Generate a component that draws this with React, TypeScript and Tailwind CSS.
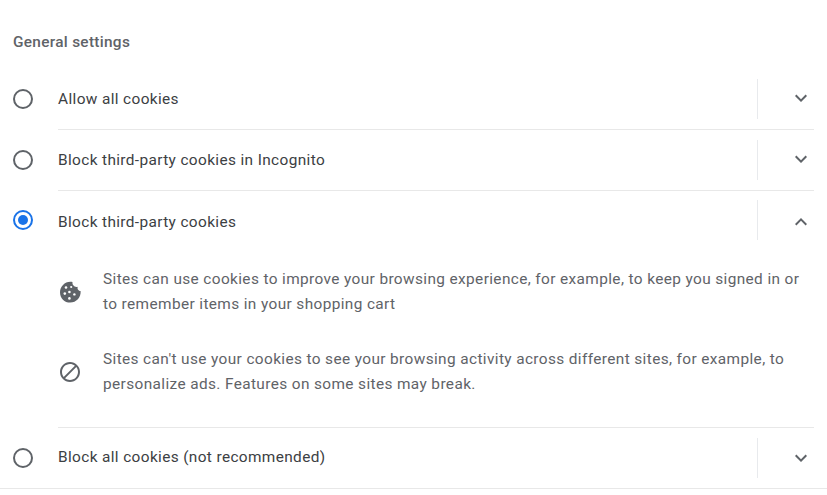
const font = "font-['Roboto',sans-serif]";

function Chevron({ up }: { up?: boolean }) {
  return (
    <svg width="24" height="24" viewBox="0 0 24 24" fill="#5f6368">
      {up ? (
        <path d="M7.41 15.41 12 10.83l4.59 4.58L18 14l-6-6-6 6z" />
      ) : (
        <path d="M7.41 8.59 12 13.17l4.59-4.58L18 10l-6 6-6-6z" />
      )}
    </svg>
  );
}

function Radio({ checked }: { checked?: boolean }) {
  return (
    <div
      className={`w-5 h-5 rounded-full border-2 flex items-center justify-center shrink-0 ${
        checked ? "border-[#1a73e8]" : "border-[#5f6368]"
      }`}
    >
      {checked && <div className="w-2.5 h-2.5 rounded-full bg-[#1a73e8]" />}
    </div>
  );
}

function Row({
  label,
  checked,
  open,
  h,
  line,
  radioPad = "",
  textPad = "",
  chevPad = "",
}: {
  label: string;
  checked?: boolean;
  open?: boolean;
  h: string;
  line?: boolean;
  radioPad?: string;
  textPad?: string;
  chevPad?: string;
}) {
  return (
    <div className={`flex items-center ${h}`}>
      <div className={`w-[58px] pl-[13px] shrink-0 ${radioPad}`}>
        <Radio checked={checked} />
      </div>
      <div className={`flex-1 h-full flex items-center ${line ? "border-b border-[#e8e8e8]" : ""} mr-[13px]`}>
        <span className={`flex-1 text-[15.4px] tracking-[0.37px] text-[#3c4043] ${textPad}`}>{label}</span>
        <div className="w-px h-10 bg-[#e8eaed]" />
        <div className={`w-[56px] flex justify-end pr-[1.5px] ${chevPad}`}>
          <Chevron up={open} />
        </div>
      </div>
    </div>
  );
}

function Detail({ icon, first, second }: { icon: React.ReactNode; first: string; second: string }) {
  return (
    <div className="flex items-center pl-[58px]">
      <div className="w-[45px] shrink-0">{icon}</div>
      <p className="text-[15.4px] leading-[25px] tracking-[0.38px] text-[#5f6368] whitespace-nowrap">
        {first}
        <br />
        {second}
      </p>
    </div>
  );
}

export default function App() {
  return (
    <div className={`${font} w-[827px] h-[495px] bg-white overflow-hidden`}>
      <h2 className="pl-[13px] pt-[32px] h-[68px] text-[15.4px] leading-[20px] font-medium tracking-[0.3px] text-[#5f6368]">
        General settings
      </h2>
      <Row h="h-[62px]" label="Allow all cookies" line textPad="pt-[2px]" chevPad="pb-[2px]" />
      <Row h="h-[61px]" label="Block third-party cookies in Incognito" line radioPad="pb-[2px]" textPad="pt-[1px]" chevPad="pb-[2px]" />
      <Row h="h-[58px]" label="Block third-party cookies" checked open textPad="pt-[6px]" chevPad="pt-[4px]" />
      <div className="pt-[18px] pb-[30px] flex flex-col gap-[30px]">
        <Detail
          first="Sites can use cookies to improve your browsing experience, for example, to keep you signed in or"
          second="to remember items in your shopping cart"
          icon={
            <svg width="24" height="24" viewBox="0 0 24 24" fill="#5f6368">
              <path d="M22.6 11c-1.8 0-3.8-1.9-2.8-4.3-3 1-5.9-1.6-5.3-4.6C7.9.6 2 6.1 2 12.4 2 18 6.5 22.6 12.2 22.6c6 0 11-5.3 10.4-11.6z" />
              <circle cx="8" cy="7.5" r="1.3" fill="#fff" />
              <circle cx="13.2" cy="7" r="1.1" fill="#fff" />
              <circle cx="11.4" cy="12" r="1.3" fill="#fff" />
              <circle cx="6.8" cy="13.6" r="1.3" fill="#fff" />
              <circle cx="16.4" cy="14.4" r="1.2" fill="#fff" />
              <circle cx="11.4" cy="18.4" r="1.3" fill="#fff" />
            </svg>
          }
        />
        <Detail
          first="Sites can't use your cookies to see your browsing activity across different sites, for example, to"
          second="personalize ads. Features on some sites may break."
          icon={
            <svg width="24" height="24" viewBox="0 0 24 24" fill="#5f6368">
              <path d="M12 2C6.48 2 2 6.48 2 12s4.48 10 10 10 10-4.48 10-10S17.52 2 12 2zM4 12c0-4.42 3.58-8 8-8 1.85 0 3.55.63 4.9 1.69L5.69 16.9C4.63 15.55 4 13.85 4 12zm8 8c-1.85 0-3.55-.63-4.9-1.69L18.31 7.1C19.37 8.45 20 10.15 20 12c0 4.42-3.58 8-8 8z" />
            </svg>
          }
        />
      </div>
      <div className="ml-[58px] mr-[13px] h-px bg-[#e8e8e8]" />
      <div className="border-b border-[#e8e8e8] pb-px">
        <Row h="h-[59px]" label="Block all cookies (not recommended)" textPad="pt-[1px]" />
      </div>
    </div>
  );
}
